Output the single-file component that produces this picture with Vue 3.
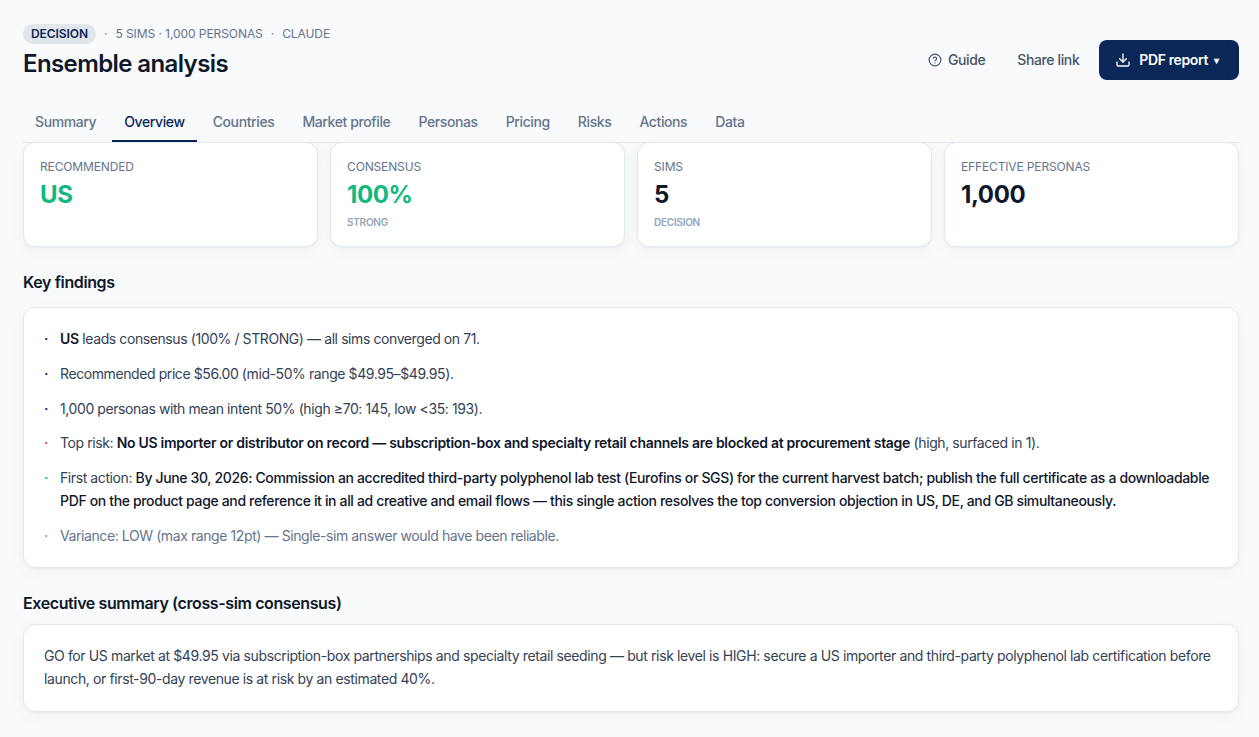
<template>
  <main class="page">
    <header class="header">
      <div class="heading">
        <div class="meta">
          <span class="badge">Decision</span>
          <span>·</span>
          <span>5 sims · 1,000 personas</span>
          <span>·</span>
          <span>Claude</span>
        </div>
        <h1 class="title">Ensemble analysis</h1>
      </div>

      <div class="actions">
        <button type="button" class="btn btn-guide">
          <svg class="icon-help" viewBox="0 0 24 24" aria-hidden="true">
            <circle cx="12" cy="12" r="10" />
            <path d="M9.09 9a3 3 0 0 1 5.83 1c0 2-3 3-3 3" />
            <path d="M12 17h.01" />
          </svg>
          Guide
        </button>
        <button type="button" class="btn">Share link</button>
        <button type="button" class="btn btn-primary">
          <svg class="icon-download" viewBox="0 0 24 24" aria-hidden="true">
            <path d="M21 15v4a2 2 0 0 1-2 2H5a2 2 0 0 1-2-2v-4" />
            <path d="m7 10 5 5 5-5" />
            <path d="M12 15V3" />
          </svg>
          <span>PDF report</span>
          <span class="caret">▾</span>
        </button>
      </div>
    </header>

    <nav class="tabs">
      <button
        v-for="tab in tabs"
        :key="tab"
        type="button"
        class="tab"
        :class="{ active: tab === activeTab }"
        @click="activeTab = tab"
      >
        {{ tab }}
      </button>
    </nav>

    <section class="stats">
      <div v-for="s in stats" :key="s.label" class="card stat">
        <div class="stat-label">{{ s.label }}</div>
        <div class="stat-value" :class="{ success: s.success }">{{ s.value }}</div>
        <div v-if="s.hint" class="stat-hint">{{ s.hint }}</div>
      </div>
    </section>

    <section class="findings">
      <h2 class="section-title">Key findings</h2>
      <ul class="card findings-list">
        <li v-for="f in findings" :key="f.key" class="finding" :class="f.tone">
          <span class="dot">·</span>
          <span>{{ f.before }}<strong v-if="f.strong">{{ f.strong }}</strong>{{ f.after }}</span>
        </li>
      </ul>
    </section>

    <section class="summary">
      <h2 class="section-title">Executive summary (cross-sim consensus)</h2>
      <p class="card summary-text">
        GO for US market at $49.95 via subscription-box partnerships and specialty retail seeding — but
        risk level is HIGH: secure a US importer and third-party polyphenol lab certification before
        launch, or first-90-day revenue is at risk by an estimated 40%.
      </p>
    </section>
  </main>
</template>

<script setup>
import { ref } from 'vue'

const tabs = [
  'Summary',
  'Overview',
  'Countries',
  'Market profile',
  'Personas',
  'Pricing',
  'Risks',
  'Actions',
  'Data',
]
const activeTab = ref('Overview')

const stats = [
  { label: 'Recommended', value: 'US', success: true },
  { label: 'Consensus', value: '100%', hint: 'Strong', success: true },
  { label: 'Sims', value: '5', hint: 'Decision' },
  { label: 'Effective personas', value: '1,000' },
]

const findings = [
  {
    key: 'consensus',
    strong: 'US',
    after: ' leads consensus (100% / STRONG) — all sims converged on 71.',
  },
  { key: 'price', before: 'Recommended price $56.00 (mid-50% range $49.95–$49.95).' },
  { key: 'intent', before: '1,000 personas with mean intent 50% (high ≥70: 145, low <35: 193).' },
  {
    key: 'risk',
    tone: 'risk',
    before: 'Top risk: ',
    strong:
      'No US importer or distributor on record — subscription-box and specialty retail channels are blocked at procurement stage',
    after: ' (high, surfaced in 1).',
  },
  {
    key: 'action',
    tone: 'action',
    before: 'First action: ',
    strong:
      'By June 30, 2026: Commission an accredited third-party polyphenol lab test (Eurofins or SGS) for the current harvest batch; publish the full certificate as a downloadable PDF on the product page and reference it in all ad creative and email flows — this single action resolves the top conversion objection in US, DE, and GB simultaneously.',
  },
  {
    key: 'variance',
    tone: 'muted',
    before: 'Variance: LOW (max range 12pt) — Single-sim answer would have been reliable.',
  },
]
</script>

<style>
body {
  background: #f8fafc;
}
</style>

<style scoped>
.page {
  box-sizing: border-box;
  min-height: 737px;
  padding: 24px 20px 24px 23px;
  font-family: Inter, 'Liberation Sans', sans-serif;
  font-size: 14px;
  line-height: 20px;
  letter-spacing: -0.41px;
  color: #0f172a;
}

.header {
  display: flex;
  align-items: flex-end;
  justify-content: space-between;
}

.meta {
  display: flex;
  align-items: center;
  gap: 8px;
  height: 20px;
  font-size: 12px;
  line-height: 16px;
  letter-spacing: -0.07px;
  text-transform: uppercase;
  color: #64748b;
}

.badge {
  padding: 2px 8px;
  border-radius: 999px;
  background: #e1e5ec;
  color: #0a2757;
  font-weight: 600;
}

.title {
  margin: 4px 0 0;
  font-size: 24px;
  line-height: 32px;
  font-weight: 600;
  letter-spacing: -0.6px;
}

.actions {
  display: flex;
  align-items: center;
  gap: 4px;
}

.btn {
  display: inline-flex;
  align-items: center;
  height: 40px;
  padding: 0 16px;
  border: 0;
  border-radius: 8px;
  background: transparent;
  color: #475569;
  font-family: inherit;
  font-size: 14px;
  line-height: 20px;
  font-weight: 500;
  letter-spacing: -0.38px;
  cursor: pointer;
}

.btn-guide {
  gap: 6px;
  padding: 0 12px;
}

.btn-primary {
  gap: 8px;
  background: #0a2757;
  color: #fff;
  font-weight: 600;
}

.icon-help,
.icon-download {
  fill: none;
  stroke: currentColor;
  stroke-width: 2;
  stroke-linecap: round;
  stroke-linejoin: round;
}

.icon-help {
  width: 14px;
  height: 14px;
}

.icon-download {
  width: 16px;
  height: 16px;
}

.caret {
  width: 9px;
  margin-left: -2px;
  font-size: 10px;
  text-align: left;
}

.tabs {
  display: flex;
  gap: 4px;
  margin-top: 22px;
  border-bottom: 1px solid #e2e8f0;
}

.tab {
  height: 40px;
  padding: 2px 12px 0;
  border: 0;
  border-bottom: 2px solid transparent;
  background: transparent;
  color: #64748b;
  font-family: inherit;
  font-size: 14px;
  line-height: 20px;
  font-weight: 500;
  letter-spacing: -0.39px;
  cursor: pointer;
}

.tab.active {
  border-bottom-color: #0a2757;
  color: #0a2757;
}

.card {
  box-sizing: border-box;
  border: 1px solid #e2e8f0;
  border-radius: 12px;
  background: #fff;
  box-shadow:
    0 1px 2px rgba(15, 23, 42, 0.04),
    0 4px 16px rgba(15, 23, 42, 0.04);
}

.stats {
  display: grid;
  grid-template-columns: repeat(4, 1fr);
  gap: 12px;
  margin-top: -1px;
}

.stat {
  height: 105px;
  padding: 16px;
}

.stat-label {
  font-size: 12px;
  line-height: 16px;
  letter-spacing: -0.14px;
  text-transform: uppercase;
  color: #64748b;
}

.stat-value {
  margin-top: 4px;
  font-size: 24px;
  line-height: 32px;
  font-weight: 700;
  letter-spacing: -0.4px;
}

.stat-value.success {
  color: #10b981;
}

.stat-hint {
  margin-top: 4px;
  font-size: 10px;
  line-height: 15px;
  font-weight: 600;
  letter-spacing: -0.25px;
  text-transform: uppercase;
  color: #94a3b8;
}

.section-title {
  margin: 0;
  font-size: 16px;
  line-height: 24px;
  font-weight: 600;
  letter-spacing: -0.39px;
}

.findings {
  margin-top: 23px;
}

.findings-list {
  display: flex;
  flex-direction: column;
  gap: 12px;
  margin: 13px 0 0;
  padding: 20px;
  list-style: none;
  line-height: 22.75px;
  color: #334155;
}

.finding {
  display: flex;
  gap: 12px;
}

.finding strong {
  font-weight: 600;
  letter-spacing: -0.29px;
  color: #0f172a;
}

.finding.action strong {
  font-weight: 500;
  letter-spacing: -0.35px;
}

.finding.muted {
  color: #64748b;
}

.dot {
  flex: none;
  width: 4px;
  font-weight: 600;
  letter-spacing: 0;
  color: #0a2757;
}

.risk .dot {
  color: #ef4444;
}

.action .dot {
  color: #10b981;
}

.muted .dot {
  color: #94a3b8;
}

.summary {
  margin-top: 23px;
}

.summary-text {
  margin: 9px 0 0;
  padding: 20px;
  line-height: 22.75px;
  letter-spacing: -0.38px;
  color: #334155;
}
</style>
